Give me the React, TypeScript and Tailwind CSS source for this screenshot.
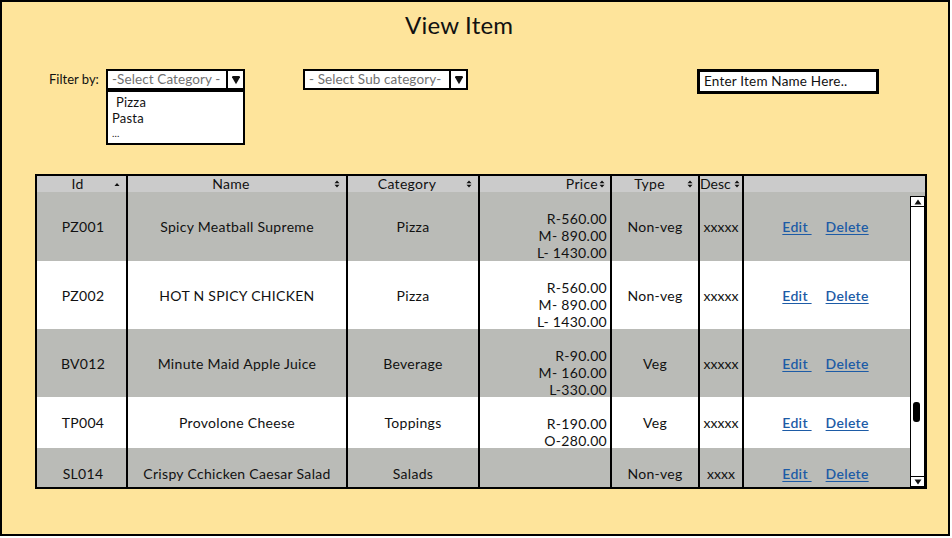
import React from 'react';

type Row = {
  id: string;
  name: string;
  category: string;
  prices: string[];
  type: string;
  desc: string;
  height: string;
  bg: string;
};

const rows: Row[] = [
  { id: 'PZ001', name: 'Spicy Meatball Supreme', category: 'Pizza', prices: ['R-560.00', 'M- 890.00', 'L- 1430.00'], type: 'Non-veg', desc: 'xxxxx', height: 'h-[69px]', bg: 'bg-[#babbb7]' },
  { id: 'PZ002', name: 'HOT N SPICY CHICKEN', category: 'Pizza', prices: ['R-560.00', 'M- 890.00', 'L- 1430.00'], type: 'Non-veg', desc: 'xxxxx', height: 'h-[68px]', bg: 'bg-white' },
  { id: 'BV012', name: 'Minute Maid Apple Juice', category: 'Beverage', prices: ['R-90.00', 'M- 160.00', 'L-330.00'], type: 'Veg', desc: 'xxxxx', height: 'h-[68px]', bg: 'bg-[#babbb7]' },
  { id: 'TP004', name: 'Provolone Cheese', category: 'Toppings', prices: ['R-190.00', 'O-280.00'], type: 'Veg', desc: 'xxxxx', height: 'h-[51px]', bg: 'bg-white' },
  { id: 'SL014', name: 'Crispy Cchicken Caesar Salad', category: 'Salads', prices: [], type: 'Non-veg', desc: 'xxxx', height: 'h-[51px]', bg: 'bg-[#babbb7]' },
];

// sort arrows in the header
function SortIcon({ up }: { up?: boolean }) {
  return (
    <svg width="6" height="8" viewBox="0 0 6 8" className="shrink-0">
      {up ? <path d="M3 3 L5.5 6 H0.5 Z" fill="#111" /> : <path d="M3 0.5 L5.5 3.2 H0.5 Z M0.5 4.8 H5.5 L3 7.5 Z" fill="#111" />}
    </svg>
  );
}

function DropArrow() {
  return (
    <svg width="10" height="10" viewBox="0 0 10 10">
      <path d="M1 2.2 Q1 1 2.2 1 H7.8 Q9 1 9 2.2 L5 9.2 Z" fill="#111" />
    </svg>
  );
}

function Select({ label, width }: { label: string; width: string }) {
  return (
    <div className={`flex h-[21px] ${width} border-2 border-black bg-white`}>
      <div className="flex-1 overflow-hidden whitespace-nowrap pl-[4px] text-[13.5px] leading-[17px] tracking-[0.1px] text-[#6f6f6f]">{label}</div>
      <div className="flex w-[17px] items-center justify-center border-l-2 border-black">
        <DropArrow />
      </div>
    </div>
  );
}

export default function App() {
  return (
    <div className="h-[538px] w-[952px] bg-white font-['Lato','Open_Sans',sans-serif] text-[#111]">
      <div className="flex h-[536px] w-[950px] flex-col border-2 border-black bg-[#fee49b]">
        <h1 className="pl-[403px] pt-[9px] text-[24px] leading-[28px] tracking-[0.2px]">View Item</h1>

        {/* filters */}
        <div className="mt-[30px] flex items-start pl-[47px]">
          <span className="w-[57px] text-[13px] leading-[20px]">Filter by:</span>
          <div className="relative">
            <Select label="-Select Category -" width="w-[139px]" />
            <div className="absolute left-0 top-[21px] h-[55px] w-[139px] border-2 border-black bg-white pt-[2px] text-[13px] leading-[16px] tracking-[0.2px]">
              <div className="pl-[8px]">Pizza</div>
              <div className="pl-[4px]">Pasta</div>
              <div className="pl-[4px] text-[10px] leading-[14px]">...</div>
            </div>
          </div>
          <div className="ml-[58px]">
            <Select label="- Select Sub category-" width="w-[165px]" />
          </div>
          <div className="ml-[229px] h-[25px] w-[182px] border-[3px] border-black bg-white pl-[4px] text-[13.5px] leading-[19px] tracking-[0.2px]">
            Enter Item Name Here..
          </div>
        </div>

        {/* table */}
        <div className="ml-[33px] mt-[80px] flex h-[315px] w-[892px] flex-col border-2 border-black text-[14px] tracking-[0.3px]">
          <div className="flex h-[16px] bg-[#cbcbcb] text-[14px] leading-[16px]">
            <div className="flex w-[91px] items-center border-r-2 border-black pr-[6px]">
              <span className="flex-1 pl-[4px] text-center">Id</span>
              <SortIcon up />
            </div>
            <div className="flex w-[220px] items-center border-r-2 border-black pr-[6px]">
              <span className="flex-1 text-center">Name</span>
              <SortIcon />
            </div>
            <div className="flex w-[132px] items-center border-r-2 border-black pr-[6px]">
              <span className="flex-1 text-center">Category</span>
              <SortIcon />
            </div>
            <div className="flex w-[132px] items-center justify-end gap-[1px] border-r-2 border-black pr-[5px]">
              <span>Price</span>
              <SortIcon />
            </div>
            <div className="flex w-[88px] items-center border-r-2 border-black pr-[5px]">
              <span className="flex-1 text-center">Type</span>
              <SortIcon />
            </div>
            <div className="flex w-[44px] items-center border-r-2 border-black pr-[2px]">
              <span className="flex-1 tracking-normal">Desc</span>
              <SortIcon />
            </div>
            <div className="flex-1" />
          </div>

          <div className="flex min-h-0 flex-1">
            <div className="w-[873px] overflow-hidden">
              {rows.map((r) => (
                <div key={r.id} className={`flex ${r.height} ${r.bg}`}>
                  <div className="flex w-[91px] items-center justify-center border-r-2 border-black pl-[3px]">{r.id}</div>
                  <div className="flex w-[220px] items-center justify-center border-r-2 border-black">{r.name}</div>
                  <div className="flex w-[132px] items-center justify-center border-r-2 border-black">{r.category}</div>
                  <div className="flex w-[132px] flex-col items-end justify-center border-r-2 border-black pr-[3px] pt-[18px] leading-[17px]">
                    {r.prices.map((p) => (
                      <span key={p}>{p}</span>
                    ))}
                  </div>
                  <div className="flex w-[88px] items-center justify-center border-r-2 border-black">{r.type}</div>
                  <div className="flex w-[44px] items-center justify-center border-r-2 border-black tracking-normal">{r.desc}</div>
                  <div className="flex w-[166px] items-center justify-center gap-[14px] pr-[3px] font-semibold text-[#1d5ba6]">
                    <span className="underline underline-offset-2">Edit&nbsp;</span>
                    <span className="underline underline-offset-2">Delete</span>
                  </div>
                </div>
              ))}
            </div>

            {/* scrollbar */}
            <div className="flex w-[15px] flex-col bg-[#babbb7] pt-[4px]">
              <div className="flex flex-1 flex-col border-[1.5px] border-black bg-white">
                <div className="flex h-[10px] items-center justify-center border-b border-black">
                  <svg width="8" height="6" viewBox="0 0 8 6"><path d="M4 0.5 L7.5 5.5 H0.5 Z" fill="#111" /></svg>
                </div>
                <div className="flex-1">
                  <div className="ml-[2px] mt-[195px] h-[20px] w-[7px] rounded-[3px] bg-black" />
                </div>
                <div className="flex h-[10px] items-center justify-center border-t border-black">
                  <svg width="8" height="6" viewBox="0 0 8 6"><path d="M0.5 0.5 H7.5 L4 5.5 Z" fill="#111" /></svg>
                </div>
              </div>
            </div>
          </div>
        </div>
      </div>
    </div>
  );
}
